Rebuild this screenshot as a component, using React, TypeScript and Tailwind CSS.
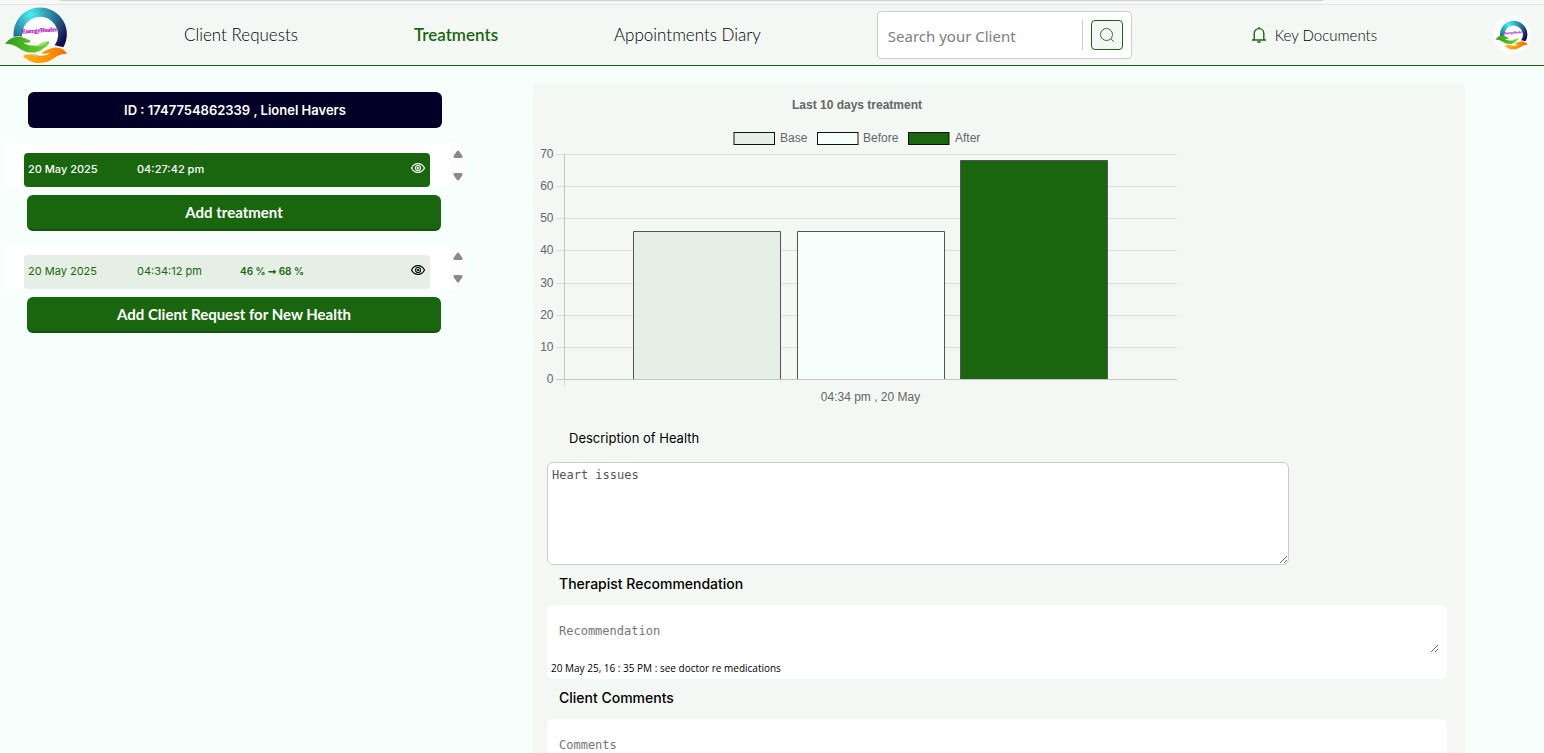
import React, { useState } from 'react'

const series = [
  { label: 'Base', value: 46, color: '#e5efe5', x: 96.5, legendX: 197, textX: 243 },
  { label: 'Before', value: 46, color: '#f6fffc', x: 260.5, legendX: 280.5, textX: 326 },
  { label: 'After', value: 68, color: '#1a660e', x: 423.5, legendX: 371.5, textX: 418 },
]

const ticks = [
  { value: 70, y: 65.5 },
  { value: 60, y: 97.5 },
  { value: 50, y: 129.5 },
  { value: 40, y: 161.5 },
  { value: 30, y: 194.5 },
  { value: 20, y: 226.5 },
  { value: 10, y: 258.5 },
  { value: 0, y: 290.5 },
]

function Logo({ id, className }: { id: string; className: string }) {
  return (
    <svg className={className} viewBox="12 18 192 174" role="img" aria-label="Energy Healer">
      <defs>
        <radialGradient id={`${id}-ring`} gradientUnits="userSpaceOnUse" cx="92" cy="44" r="125">
          <stop offset="0" stopColor="#4cf0f4" />
          <stop offset="0.3" stopColor="#36aebf" />
          <stop offset="0.62" stopColor="#236f92" />
          <stop offset="1" stopColor="#150d4b" />
        </radialGradient>
        <linearGradient id={`${id}-green`} x1="0" x2="1">
          <stop offset="0" stopColor="#2c9a1c" />
          <stop offset="1" stopColor="#75d62f" />
        </linearGradient>
        <linearGradient id={`${id}-orange`} x1="0" x2="1">
          <stop offset="0" stopColor="#ffb01a" />
          <stop offset="0.6" stopColor="#fb9200" />
          <stop offset="1" stopColor="#f96a0c" />
        </linearGradient>
      </defs>
      <circle cx="120" cy="101" r="55" fill="#fff" />
      <path d="M50 140A80 80 0 1 1 190 142L164 136A54 54 0 1 0 68 118L39 112Z" fill={`url(#${id}-ring)`} />
      <text x="119" y="97" textAnchor="middle" fontSize="18" fontWeight="700" fontFamily="Liberation Serif, serif" fill="#b514b8" stroke="#b514b8" strokeWidth="0.7" transform="rotate(-4 120 98)">
        EnergyHealer
      </text>
      <path d="M38 112C58 104 80 112 96 122C110 130 126 132 146 126C154 124 150 136 140 142L164 138L150 158L80 162L42 138Z" fill="#f4f8f5" />
      <path d="M15 131C25 118 36 111 52 110C66 109 76 115 88 121C94 124 90 129 82 128L70 128C84 138 104 138 116 134C128 129 142 122 148 126C150 131 138 140 128 147C112 159 94 160 78 155C58 149 48 131 15 131Z" fill={`url(#${id}-green)`} />
      <path d="M202 161C192 148 180 141 163 143C148 145 136 151 126 158C129 163 139 160 150 160C134 170 116 168 108 164C98 159 80 161 69 168C71 173 80 176 88 182C104 191 128 191 146 184C164 176 172 161 202 161Z" fill={`url(#${id}-orange)`} />
      <path d="M84 164C93 160 100 164 108 170" fill="none" stroke="#f4f8f5" strokeWidth="2" />
      <path d="M102 136C114 139 126 135 138 129" fill="none" stroke="#f4f8f5" strokeWidth="2" />
    </svg>
  )
}

function EyeIcon() {
  return (
    <svg className="h-4 w-4" viewBox="0 0 16 16" fill="none" stroke="currentColor" strokeWidth="1.2">
      <path d="M1.5 8C3 5 5.300 3.600 8 3.600S13 5 14.500 8C13 11 10.700 12.400 8 12.400S3 11 1.500 8Z" />
      <circle cx="8" cy="8" r="2.500" />
      <circle cx="8" cy="8" r="0.500" fill="currentColor" />
    </svg>
  )
}

function ScrollArrows() {
  return (
    <div className="flex w-4 flex-col items-center justify-between bg-[#fcfcfc] pb-[6px] pt-[7px]" aria-hidden="true">
      <svg className="h-2 w-[10px]" viewBox="0 0 10 8" fill="#8a8a8a"><path d="M4 1Q5 0 6 1L9.500 6Q10 8 8 8H2Q0 8 .5 6Z" /></svg>
      <svg className="h-2 w-[10px]" viewBox="0 0 10 8" fill="#8a8a8a"><path d="M4 7Q5 8 6 7L9.500 2Q10 0 8 0H2Q0 0 .5 2Z" /></svg>
    </div>
  )
}

function TreatmentList({ date, time, change, active }: { date: string; time: string; change?: string; active?: boolean }) {
  return (
    <div className="ml-1 mr-[67px] flex h-11 bg-white">
      <div className="flex-1 px-5 pt-[10px]">
        <div className={`flex h-[34px] items-center rounded px-1 pb-[2px] text-[11px] ${active ? 'bg-[#1a660e] font-medium text-white' : 'bg-[#e5efe5] text-[#1a660e]'}`}>
          <span className="w-[109px]">{date}</span>
          <span className="w-[103px]">{time}</span>
          <span className="flex-1 text-[10px] font-semibold">{change}</span>
          <button aria-label="View" className={`pb-[2px] ${active ? 'text-white' : 'text-black'}`}><EyeIcon /></button>
        </div>
      </div>
      <ScrollArrows />
    </div>
  )
}

function TreatmentChart() {
  return (
    <svg className="ml-1 block h-[320px] w-[640px]" viewBox="0 0 640 320" fontFamily="Liberation Sans, Arial, sans-serif" fontSize="12" fill="#666">
      <text x="320" y="20" textAnchor="middle" fontWeight="700">Last 10 days treatment</text>
      {series.map(s => (
        <g key={s.label}>
          <rect x={s.legendX} y="43.500" width="40.500" height="12" fill={s.color} stroke="#111" />
          <text x={s.textX} y="53">{s.label}</text>
        </g>
      ))}
      {ticks.map(t => (
        <g key={t.value}>
          <path d={`M19 ${t.y}H640`} stroke={t.value === 0 ? '#c3c7c4' : '#dadedb'} />
          <text x="16.500" y={t.y + 3.5} textAnchor="end">{t.value}</text>
        </g>
      ))}
      <path d="M27.500 65V290" stroke="#c3c7c4" />
      <path d="M27.500 291V298" stroke="#dadedb" />
      {series.map(s => {
        const top = Math.floor(290 - s.value * 3.214) + 0.5
        return (
          <g key={s.label}>
            <rect x={s.x} y={top} width="147" height={290 - top} fill={s.color} />
            <path d={`M${s.x} 290V${top}H${s.x + 147}V290`} fill="none" stroke="#555" />
          </g>
        )
      })}
      <text x="333.500" y="312" textAnchor="middle">04:34 pm , 20 May</text>
    </svg>
  )
}

function NoteCard({ id, title, placeholder, note }: { id: string; title: string; placeholder: string; note?: string }) {
  return (
    <section>
      <label htmlFor={id} className="flex h-10 items-center pb-[3px] pl-3 text-[14px] font-medium">{title}</label>
      <div className="h-[74px] rounded-md bg-white px-1 pt-1">
        <textarea id={id} placeholder={placeholder} className="block h-12 w-full resize border-4 border-white bg-white px-1 pt-[10px] font-['DejaVu_Sans_Mono',monospace] text-xs placeholder:text-[#757575] outline-none" />
        <p className="pt-[3px] font-['Open_Sans',sans-serif] text-[10px] leading-4">{note}</p>
      </div>
    </section>
  )
}

export default function App() {
  const [busca, setBusca] = useState('')
  const [description, setDescription] = useState('Heart issues')

  return (
    <div className="flex h-screen flex-col overflow-hidden bg-[#f6fffc] font-[Inter,sans-serif] text-black">
      <div className="h-[5px] shrink-0 border-b border-[#e4e4e4] bg-[#f7f7f7] pl-[60px] pr-[221px]">
        <div className="h-px bg-[#cfcfcf]" />
      </div>

      <header className="flex h-[61px] shrink-0 items-center justify-between border-b border-[#1a660e] bg-[#f4f8f5] pl-1 pr-[13px] font-[Lato,sans-serif] text-[17px] whitespace-nowrap">
        <a href="#"><Logo id="logo" className="h-[58px] w-16" /></a>
        <a href="#" className="font-light">Client Requests</a>
        <a href="#" className="font-semibold text-[#1a660e]">Treatments</a>
        <a href="#" className="font-light">Appointments Diary</a>
        <form className="flex h-12 w-[255px] items-center rounded border border-[#ccc] bg-white pl-[10px] pr-2" onSubmit={(e) => e.preventDefault()}>
          <input
            type="text"
            aria-label="Search your Client"
            placeholder="Search your Client"
            value={busca}
            onChange={(e) => setBusca(e.target.value)}
            className="min-w-0 flex-1 pt-[2px] font-['Noto_Sans',sans-serif] text-[15px] placeholder:text-[#7d7d7d] outline-none"
          />
          <div className="mr-2 h-[30px] w-px bg-[#ccc]" />
          <button aria-label="Search" className="flex h-[30px] w-8 items-center justify-center rounded border border-[#1a660e] bg-[#f4f8f5] text-[#1a660e]">
            <svg className="h-4 w-4" viewBox="0 0 16 16" fill="none" stroke="currentColor" strokeWidth="0.9">
              <circle cx="7.500" cy="7.500" r="6" />
              <path d="M11.800 11.800L15 14.800" />
            </svg>
          </button>
        </form>
        <a href="#" className="flex items-center gap-2 pl-[3px] text-[15px] font-light">
          <svg className="h-[18px] w-4 text-[#1a660e]" viewBox="0 0 16 18" fill="none" stroke="currentColor" strokeWidth="1.4">
            <path d="M1 14H15M3.200 14V7.500C3.200 4.600 5.300 2.600 8 2.600S12.800 4.600 12.800 7.500V14M8 2.600V1M6.300 16H9.700" />
          </svg>
          Key Documents
        </a>
        <a href="#" aria-label="Profile" className="flex h-[38px] w-[38px] items-center justify-center rounded-full bg-white">
          <Logo id="avatar" className="h-[30px] w-[33px]" />
        </a>
      </header>

      <main className="flex min-h-0 flex-1">
        <aside className="w-[533px] shrink-0 pt-[26px]">
          <h1 className="ml-7 mr-[91px] flex h-9 items-center justify-center rounded-md bg-[#030027] pt-[2px] text-[13px] font-semibold text-white">
            ID : 1747754862339 , Lionel Havers
          </h1>
          <div className="mt-[15px]">
            <TreatmentList date="20 May 2025" time="04:27:42 pm" active />
            <div className="ml-[27px] mr-[92px] mt-2">
              <button className="h-9 w-full rounded-md border-b-2 border-[#15500c] bg-[#1a660e] font-[Lato,sans-serif] text-[15px] font-bold text-white">Add treatment</button>
            </div>
          </div>
          <div className="mt-[14px]">
            <TreatmentList date="20 May 2025" time="04:34:12 pm" change="46 % ➞ 68 %" />
            <div className="ml-[27px] mr-[92px] mt-2">
              <button className="h-9 w-full rounded-md border-b-2 border-[#15500c] bg-[#1a660e] font-[Lato,sans-serif] text-[15px] font-bold text-white">Add Client Request for New Health</button>
            </div>
          </div>
        </aside>

        <div className="mr-[79px] mt-[18px] min-w-0 flex-1 overflow-hidden bg-[#f4f8f5] pt-[5px]">
          <TreatmentChart />
          <div className="pl-[14px] pr-[18px]">
            <label htmlFor="description" className="flex h-[53px] items-center pl-[22px] pt-[6px] text-[13px]">Description of Health</label>
            <textarea
              id="description"
              value={description}
              onChange={(e) => setDescription(e.target.value)}
              className="block h-[103px] w-[742px] max-w-full resize rounded-md border border-[#ccc] bg-white px-1 pt-1 font-['DejaVu_Sans_Mono',monospace] text-xs text-[#555] outline-none"
            />
            <NoteCard id="recommendation" title="Therapist Recommendation" placeholder="Recommendation" note="20 May 25, 16 : 35 PM : see doctor re medications" />
            <NoteCard id="comments" title="Client Comments" placeholder="Comments" />
          </div>
        </div>
      </main>
    </div>
  )
}
